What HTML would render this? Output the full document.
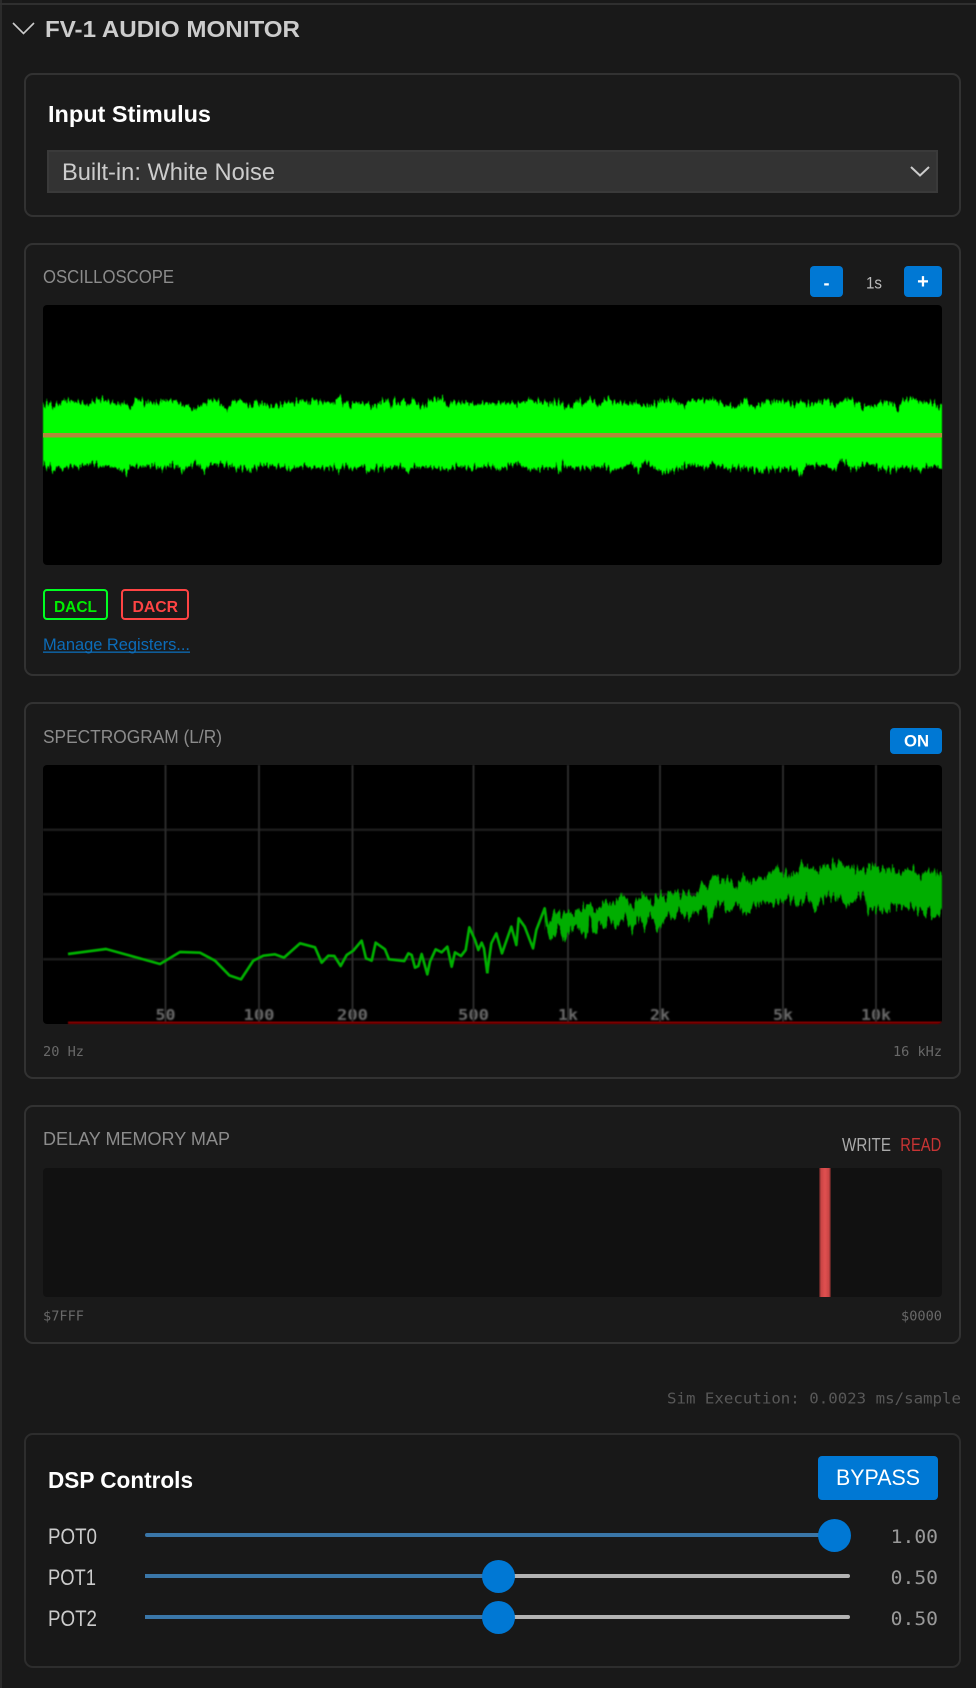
<!DOCTYPE html>
<html lang="en">
<head>
<meta charset="utf-8">
<title>FV-1 Audio Monitor</title>
<style>
html,body{margin:0;padding:0;background:#191919;}
body{position:relative;width:976px;height:1688px;overflow:hidden;font-family:"Liberation Sans",sans-serif;}
.abs{position:absolute;box-sizing:border-box;}
.card{position:absolute;box-sizing:border-box;left:24px;width:937px;border:2px solid #323232;border-radius:9px;background:#1a1a1a;}
.btn{position:absolute;background:#0078d4;border-radius:4px;}
svg.layer{position:absolute;left:0;top:0;}
text{font-family:"Liberation Sans",sans-serif;}
.mono{font-family:"DejaVu Sans Mono","Liberation Mono",monospace;}
</style>
</head>
<body>
<div class="abs" style="left:0;top:0;width:2px;height:1688px;background:#2b2b2b"></div>
<div class="abs" style="left:0;top:3px;width:976px;height:2px;background:#2f2f2f"></div>

<div class="card" style="top:73px;height:144px"></div>
<div class="card" style="top:243px;height:433px"></div>
<div class="card" style="top:702px;height:377px"></div>
<div class="card" style="top:1105px;height:239px"></div>
<div class="card" style="top:1433px;height:235px;background:#181818;border-color:#2d2d2d"></div>

<div class="abs" style="left:47px;top:150px;width:891px;height:43px;background:#333;border:2px solid #3a3a3a"></div>

<div class="btn" style="left:810px;top:266px;width:33px;height:31px"></div>
<div class="btn" style="left:904px;top:266px;width:38px;height:31px"></div>
<div class="btn" style="left:890px;top:728px;width:52px;height:26px"></div>
<div class="btn" style="left:818px;top:1456px;width:120px;height:44px"></div>

<div class="abs" style="left:43px;top:305px;width:899px;height:260px;background:#000;border-radius:4px"></div>
<div class="abs" style="left:43px;top:765px;width:899px;height:259px;background:#000;border-radius:4px"></div>
<div class="abs" style="left:43px;top:1168px;width:899px;height:129px;background:#111;border-radius:4px"></div>
<div class="abs" style="left:819px;top:1168px;width:12px;height:129px;background:linear-gradient(90deg,#3a1a1a 0,#c84444 16%,#e05050 50%,#c84444 84%,#3a1a1a 100%)"></div>

<div class="abs" style="left:43px;top:589px;width:65px;height:31px;border:2px solid #0f2;border-radius:4px"></div>
<div class="abs" style="left:121px;top:589px;width:68px;height:31px;border:2px solid #f44;border-radius:4px"></div>

<!-- sliders -->
<div class="abs" style="left:145px;top:1533px;width:705px;height:4px;background:#3a76a8;border-radius:2px"></div>
<div class="abs" style="left:145px;top:1574px;width:705px;height:4px;background:#b3b3b3;border-radius:2px"></div>
<div class="abs" style="left:145px;top:1574px;width:353px;height:4px;background:#3a76a8"></div>
<div class="abs" style="left:145px;top:1615px;width:705px;height:4px;background:#b3b3b3;border-radius:2px"></div>
<div class="abs" style="left:145px;top:1615px;width:353px;height:4px;background:#3a76a8"></div>
<div class="abs" style="left:817.5px;top:1518.5px;width:33px;height:33px;background:#0078d4;border-radius:50%"></div>
<div class="abs" style="left:481.5px;top:1559.5px;width:33px;height:33px;background:#0078d4;border-radius:50%"></div>
<div class="abs" style="left:481.5px;top:1600.5px;width:33px;height:33px;background:#0078d4;border-radius:50%"></div>

<!-- charts -->
<svg class="layer" width="976" height="1688" viewBox="0 0 976 1688" style="filter:blur(.4px)">
  <defs>
    <clipPath id="spec"><rect x="43" y="765" width="899" height="259" rx="4"/></clipPath>
    <filter id="roughA" filterUnits="userSpaceOnUse" x="0" y="300" width="976" height="270" color-interpolation-filters="sRGB">
      <feTurbulence type="fractalNoise" baseFrequency="0.5 0.03" numOctaves="2" seed="7" result="n"/>
      <feColorMatrix in="n" type="matrix" values="1.7 0 0 0 -0.35  0 0 0 0 0.5  0 0 0 0 0.5  0 0 0 0 1" result="m"/>
      <feDisplacementMap in="SourceGraphic" in2="m" scale="11" xChannelSelector="G" yChannelSelector="R"/>
    </filter>
    <filter id="roughB" filterUnits="userSpaceOnUse" x="480" y="765" width="470" height="260" color-interpolation-filters="sRGB">
      <feTurbulence type="fractalNoise" baseFrequency="0.4 0.04" numOctaves="2" seed="3" result="n"/>
      <feColorMatrix in="n" type="matrix" values="1.7 0 0 0 -0.35  0 0 0 0 0.5  0 0 0 0 0.5  0 0 0 0 1" result="m"/>
      <feDisplacementMap in="SourceGraphic" in2="m" scale="14" xChannelSelector="G" yChannelSelector="R"/>
    </filter>
  </defs>
  <!-- oscilloscope -->
  <g fill="#00ff00" filter="url(#roughA)">
    <path transform="translate(0,380) scale(.33333)" d="M129 72L150 70 165 75 190 62 215 62 240 70 265 75 290 60 305 55 325 68 350 70 385 75 395 85 407 50 425 65 445 68 470 72 490 60 520 60 545 72 575 82 600 80 625 65 640 55 660 72 680 85 700 65 720 58 740 75 770 65 800 75 830 80 860 70 905 60 925 72 935 58 970 68 1000 70 1018 48 1030 68 1060 72 1090 70 1110 78 1140 70 1165 55 1172 88 1182 52 1195 80 1210 55 1225 80 1240 55 1258 85 1275 72 1305 55 1335 62 1345 90 1358 62 1375 72 1400 65 1425 78 1466 68L1466 258 1410 265 1370 258 1340 270 1290 262 1250 260 1220 272 1195 255 1175 265 1130 262 1110 272 1085 258 1050 272 1040 250 1020 270 1000 262 945 265 910 255 880 268 840 260 790 255 750 268 730 262 710 268 690 255 640 250 610 270 585 248 560 265 545 272 535 260 505 255 490 268 450 255 420 262 390 258 378 282 370 270 345 265 320 255 300 265 295 252 270 250 240 260 205 258 190 272 180 262 160 268 150 262 129 258Z"/>
    <path transform="translate(488,380) scale(.33333)" d="M0 72L40 68 90 72 125 60 160 68 200 65 245 78 275 60 285 75 305 55 330 78 360 55 385 72 430 70 495 78 510 65 560 62 590 75 610 60 680 60 700 70 740 85 775 55 795 85 830 62 860 65 885 62 920 78 940 65 980 72 1020 58 1040 82 1075 55 1100 65 1140 85 1200 62 1232 88 1245 60 1275 55 1310 70 1340 70 1362 80L1362 268 1340 255 1300 268 1250 262 1195 270 1140 248 1100 268 1055 240 1040 275 1010 255 960 255 940 278 900 265 850 268 810 270 760 262 715 265 670 250 660 262 600 255 560 270 530 280 495 262 470 245 450 272 430 248 400 265 375 275 350 258 290 265 240 262 225 250 217 280 205 262 160 265 125 270 80 248 40 268 0 258Z"/>
  </g>

  <!-- spectrogram grid -->
  <g clip-path="url(#spec)">
    <g fill="#1c1c1c">
      <rect x="43" y="828.5" width="899" height="2.5"/>
      <rect x="43" y="893" width="899" height="2.5"/>
      <rect x="43" y="958" width="899" height="2.5"/>
    </g>
    <g font-size="15" font-weight="bold" fill="#6a6a6a" text-anchor="middle" style="filter:blur(.6px)">
      <text class="mono" x="165.5" y="1020" textLength="20" lengthAdjust="spacingAndGlyphs">50</text>
      <text class="mono" x="259" y="1020" textLength="31" lengthAdjust="spacingAndGlyphs">100</text>
      <text class="mono" x="352.5" y="1020" textLength="31" lengthAdjust="spacingAndGlyphs">200</text>
      <text class="mono" x="473.5" y="1020" textLength="31" lengthAdjust="spacingAndGlyphs">500</text>
      <text class="mono" x="568" y="1020" textLength="20" lengthAdjust="spacingAndGlyphs">1k</text>
      <text class="mono" x="660" y="1020" textLength="20" lengthAdjust="spacingAndGlyphs">2k</text>
      <text class="mono" x="783" y="1020" textLength="20" lengthAdjust="spacingAndGlyphs">5k</text>
      <text class="mono" x="876" y="1020" textLength="30" lengthAdjust="spacingAndGlyphs">10k</text>
    </g>
    <g fill="#2a2a2a">
      <rect x="164.5" y="765" width="2" height="259"/>
      <rect x="258" y="765" width="2" height="259"/>
      <rect x="351.5" y="765" width="2" height="259"/>
      <rect x="472.5" y="765" width="2" height="259"/>
      <rect x="567" y="765" width="2" height="259"/>
      <rect x="659" y="765" width="2" height="259"/>
      <rect x="782" y="765" width="2" height="259"/>
      <rect x="875" y="765" width="2" height="259"/>
    </g>
    <rect x="68" y="1021.5" width="874" height="3" fill="#7d0000"/>
    <polyline transform="translate(0,700) scale(.33333)" fill="none" stroke="#00b000" stroke-width="8" stroke-linejoin="round" points="204,762 318,747 480,792 540,756 600,758 645,782 688,826 723,838 760,782 790,767 825,763 852,773 900,730 945,742 965,788 985,767 1003,768 1022,798 1040,765 1060,752 1085,722 1098,775 1115,782 1127,728 1155,748 1167,778 1213,783 1225,760 1235,765 1245,803 1255,798 1265,762 1282,823 1290,785 1307,748 1325,757 1342,740 1355,800 1365,757 1383,768 1397,750 1408,682 1425,720 1435,750 1445,728 1452,745 1462,820"/>
    <polyline transform="translate(488,700) scale(.33333)" fill="none" stroke="#00b000" stroke-width="8" stroke-linejoin="round" points="-2,820 0,800 10,730 25,700 42,760 70,680 85,735 92,655 110,680 135,745 145,690 170,625 178,680"/>
    <g filter="url(#roughB)">
      <path transform="translate(488,700) scale(.33333)" fill="#00ae00" d="M170 635L185 670 205 635 225 650 240 645 260 640 280 620 300 610 320 635 340 610 360 605 375 620 390 590 415 590 430 620 450 600 475 580 490 615 510 580 530 590 545 585 565 570 580 590 600 580 615 590 630 575 640 550 660 550 680 525 700 545 715 530 745 560 765 525 785 540 800 545 830 535 855 505 880 515 905 525 925 520 940 485 965 500 985 510 1010 500 1040 490 1060 500 1080 505 1110 505 1135 515 1160 495 1175 515 1205 500 1225 520 1250 510 1270 505 1290 525 1320 515 1345 515 1362 530L1362 645 1340 635 1335 650 1320 630 1310 650 1295 630 1270 625 1240 615 1210 615 1190 635 1170 620 1140 635 1130 590 1110 590 1075 625 1060 595 1040 595 1010 590 980 625 960 595 930 612 900 595 860 615 830 605 800 620 770 640 750 615 730 630 700 610 680 625 665 670 655 625 635 625 610 660 600 650 575 630 555 660 540 645 510 690 490 650 470 680 450 655 430 700 415 650 410 655 380 685 365 650 350 690 335 665 320 715 305 660 290 720 270 675 245 690 225 715 215 675 205 695 185 715 175 670 170 685Z"/>
    </g>
  </g>
</svg>

<!-- text and glyph icons -->
<svg class="layer" width="976" height="1688" viewBox="0 0 976 1688">
  <rect x="43" y="433" width="899" height="4.5" fill="#b08a3a"/>
  <path d="M13 23L23.5 33.5 34 23" fill="none" stroke="#ccc" stroke-width="1.6"/>
  <path d="M911 167L920 175.5 929 167" fill="none" stroke="#ccc" stroke-width="2"/>

  <text x="45" y="37" font-size="23" font-weight="bold" fill="#ccc" textLength="255" lengthAdjust="spacingAndGlyphs">FV-1 AUDIO MONITOR</text>
  <text x="48" y="122" font-size="23" font-weight="bold" fill="#fff" textLength="163" lengthAdjust="spacingAndGlyphs">Input Stimulus</text>
  <text x="62" y="180" font-size="24" fill="#ccc" textLength="213" lengthAdjust="spacingAndGlyphs">Built-in: White Noise</text>

  <text x="43" y="283" font-size="18" fill="#8c8c8c" textLength="131" lengthAdjust="spacingAndGlyphs">OSCILLOSCOPE</text>
  <text x="826.5" y="289" font-size="18" font-weight="bold" fill="#fff" text-anchor="middle">-</text>
  <text x="866" y="288.5" font-size="17" fill="#bbb" textLength="16" lengthAdjust="spacingAndGlyphs">1s</text>
  <text x="923" y="288" font-size="20" font-weight="bold" fill="#fff" text-anchor="middle">+</text>

  <text x="54" y="612" font-size="16" font-weight="bold" fill="#0e0" textLength="43" lengthAdjust="spacingAndGlyphs">DACL</text>
  <text x="132.5" y="612" font-size="16" font-weight="bold" fill="#f44" textLength="45.5" lengthAdjust="spacingAndGlyphs">DACR</text>
  <text x="43" y="650" font-size="17" fill="#0c6cb8" textLength="147" lengthAdjust="spacingAndGlyphs">Manage Registers...</text>
  <rect x="43" y="651.5" width="147" height="1.3" fill="#0c6cb8"/>

  <text x="43" y="743" font-size="18" fill="#8c8c8c" textLength="179" lengthAdjust="spacingAndGlyphs">SPECTROGRAM (L/R)</text>
  <text x="904" y="746.7" font-size="17" font-weight="bold" fill="#fff" textLength="25" lengthAdjust="spacingAndGlyphs">ON</text>
  <text class="mono" x="43" y="1056" font-size="13.5" fill="#696969" textLength="41" lengthAdjust="spacingAndGlyphs">20 Hz</text>
  <text class="mono" x="893" y="1056" font-size="13.5" fill="#696969" textLength="49" lengthAdjust="spacingAndGlyphs">16 kHz</text>

  <text x="43" y="1145" font-size="18" fill="#8c8c8c" textLength="187" lengthAdjust="spacingAndGlyphs">DELAY MEMORY MAP</text>
  <text x="842" y="1151" font-size="18" fill="#aaa" textLength="49" lengthAdjust="spacingAndGlyphs">WRITE</text>
  <text x="900.3" y="1151" font-size="18" fill="#c83434" textLength="41" lengthAdjust="spacingAndGlyphs">READ</text>
  <text class="mono" x="43" y="1320.7" font-size="13.5" fill="#696969" textLength="41" lengthAdjust="spacingAndGlyphs">$7FFF</text>
  <text class="mono" x="901" y="1320.7" font-size="13.5" fill="#696969" textLength="41" lengthAdjust="spacingAndGlyphs">$0000</text>

  <text class="mono" x="667" y="1403.3" font-size="15.5" fill="#585858" textLength="294" lengthAdjust="spacingAndGlyphs">Sim Execution: 0.0023 ms/sample</text>

  <text x="48" y="1488" font-size="23" font-weight="bold" fill="#fff" textLength="145" lengthAdjust="spacingAndGlyphs">DSP Controls</text>
  <text x="836" y="1485" font-size="22" fill="#fff" textLength="84" lengthAdjust="spacingAndGlyphs">BYPASS</text>

  <text x="48" y="1544" font-size="22" fill="#ccc" textLength="49" lengthAdjust="spacingAndGlyphs">POT0</text>
  <text x="48" y="1585" font-size="22" fill="#ccc" textLength="48" lengthAdjust="spacingAndGlyphs">POT1</text>
  <text x="48" y="1626" font-size="22" fill="#ccc" textLength="49" lengthAdjust="spacingAndGlyphs">POT2</text>
  <text class="mono" x="890.7" y="1543" font-size="19" fill="#999" textLength="47.3" lengthAdjust="spacingAndGlyphs">1.00</text>
  <text class="mono" x="890.7" y="1584" font-size="19" fill="#999" textLength="47.3" lengthAdjust="spacingAndGlyphs">0.50</text>
  <text class="mono" x="890.7" y="1625" font-size="19" fill="#999" textLength="47.3" lengthAdjust="spacingAndGlyphs">0.50</text>
</svg>
</body>
</html>
